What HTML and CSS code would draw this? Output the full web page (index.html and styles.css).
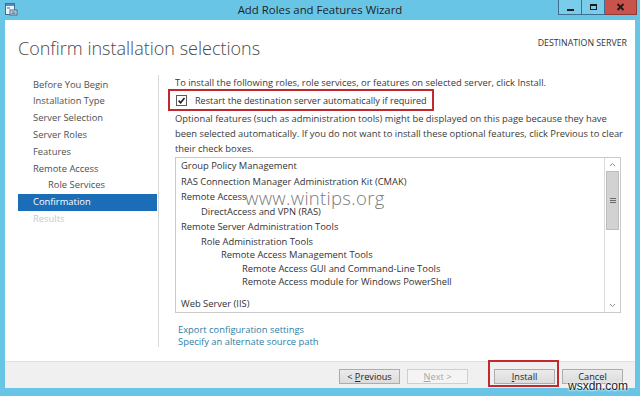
FILE: index.html
```html
<!DOCTYPE html>
<html>
<head>
<meta charset="utf-8">
<title>Add Roles and Features Wizard</title>
<link rel="stylesheet" href="styles.css">
</head>
<body>
<div class="window">
  <div class="titlebar">
    <div class="icon-cell">
      <svg class="app-icon" width="14" height="14" viewBox="0 0 14 14">
        <rect x="1.5" y="1.5" width="9" height="11" fill="#eef6fb" stroke="#3f6e96" stroke-width="1"/>
        <rect x="2" y="2" width="8" height="2" fill="#4a8fc8"/>
        <rect x="3" y="5.5" width="3" height="1" fill="#3f6e96"/>
        <rect x="6" y="8" width="7" height="5" fill="#d9e6ef" stroke="#44698a" stroke-width="1"/>
        <rect x="7.5" y="9.5" width="4" height="1" fill="#44698a"/>
        <rect x="7.5" y="11" width="4" height="0.8" fill="#44698a"/>
      </svg>
    </div>
    <div class="title">Add Roles and Features Wizard</div>
    <div class="caption-btns">
      <div class="cbtn min"><span class="glyph-min"></span></div>
      <div class="cbtn max"><span class="glyph-max"></span></div>
      <div class="cbtn close">
        <svg width="9" height="8" viewBox="0 0 9 8"><path d="M1.5 1 L7.5 7 M7.5 1 L1.5 7" stroke="#1c1c1c" stroke-width="1.8"/></svg>
      </div>
    </div>
  </div>

  <div class="client">
    <div class="header">
      <h1>Confirm installation selections</h1>
      <div class="dest">DESTINATION SERVER</div>
    </div>

    <div class="main">
      <nav class="steps">
        <div class="step">Before You Begin</div>
        <div class="step">Installation Type</div>
        <div class="step">Server Selection</div>
        <div class="step">Server Roles</div>
        <div class="step">Features</div>
        <div class="step">Remote Access</div>
        <div class="step sub">Role Services</div>
        <div class="step active">Confirmation</div>
        <div class="step disabled">Results</div>
      </nav>

      <div class="content">
        <p class="intro">To install the following roles, role services, or features on selected server, click Install.</p>
        <div class="restart">
          <span class="chk">
            <svg width="9" height="9" viewBox="0 0 9 9"><path d="M1.6 4.6 L3.6 6.7 L7.5 2" fill="none" stroke="#1e1e1e" stroke-width="1.6"/></svg>
          </span>
          <span class="restart-label">Restart the destination server automatically if required</span>
        </div>
        <p class="note">Optional features (such as administration tools) might be displayed on this page because they have<br>been selected automatically. If you do not want to install these optional features, click Previous to clear<br>their check boxes.</p>

        <div class="listbox">
          <div class="items">
            <div class="grp">
              <div class="item">Group Policy Management</div>
            </div>
            <div class="grp">
              <div class="item">RAS Connection Manager Administration Kit (CMAK)</div>
            </div>
            <div class="grp">
              <div class="item">Remote Access</div>
              <div class="item l1">DirectAccess and VPN (RAS)</div>
            </div>
            <div class="grp">
              <div class="item">Remote Server Administration Tools</div>
              <div class="item l1 tight">Role Administration Tools</div>
              <div class="item l2 tight">Remote Access Management Tools</div>
              <div class="item l3 tight">Remote Access GUI and Command-Line Tools</div>
              <div class="item l3">Remote Access module for Windows PowerShell</div>
            </div>
            <div class="grp last">
              <div class="item">Web Server (IIS)</div>
            </div>
          </div>
          <div class="scrollbar">
            <div class="sb-arrow">
              <svg width="7" height="5" viewBox="0 0 7 5"><path d="M1 4 L3.5 1.5 L6 4" fill="none" stroke="#8a8a8a" stroke-width="1"/></svg>
            </div>
            <div class="sb-thumb"><span class="grip"></span></div>
            <div class="sb-track"></div>
            <div class="sb-arrow">
              <svg width="7" height="5" viewBox="0 0 7 5"><path d="M1 1 L3.5 3.5 L6 1" fill="none" stroke="#8a8a8a" stroke-width="1"/></svg>
            </div>
          </div>
          <div class="wm-wintips">www.wintips.org</div>
        </div>

        <div class="links">
          <a href="#">Export configuration settings</a>
          <a href="#">Specify an alternate source path</a>
        </div>
      </div>
    </div>

    <div class="footer">
      <button class="btn">&lt; <u>P</u>revious</button>
      <button class="btn disabled"><u>N</u>ext &gt;</button>
      <span class="install-wrap"><button class="btn"><u>I</u>nstall</button></span>
      <button class="btn">Cancel</button>
    </div>
  </div>

  <div class="wm-wsxdn">wsxdn.com</div>
</div>
</body>
</html>
```

FILE: styles.css
```css
* { box-sizing: border-box; }

html, body {
  margin: 0;
  padding: 0;
}

body {
  width: 640px;
  height: 396px;
  overflow: hidden;
  font-family: "Open Sans", "Noto Sans", sans-serif;
  color: #333;
}

.window {
  position: relative;
  width: 640px;
  height: 396px;
  background: #68c5e6;
  display: flex;
  flex-direction: column;
}

/* Title bar */
.titlebar {
  height: 20px;
  display: grid;
  grid-template-columns: 1fr auto 1fr;
  flex: none;
}

.icon-cell {
  padding: 2px 0 0 4px;
}

.app-icon { display: block; }

.title {
  font-size: 11.4px;
  line-height: 20px;
  color: #1f1f1f;
}

.caption-btns {
  justify-self: end;
  display: flex;
  margin-right: 3px;
  height: 15px;
}

.cbtn {
  height: 15px;
  display: flex;
  align-items: center;
  justify-content: center;
  border: 1px solid #3c6f92;
  border-top: none;
}

.cbtn.min { width: 24px; background: #79cdea; }
.cbtn.max { width: 23px; background: #79cdea; border-left: none; }
.cbtn.close { width: 32px; background: #c9524c; border-color: #8e3b36; border-left: none; }

.glyph-min {
  width: 7px;
  height: 2px;
  background: #1c1c1c;
  margin-top: 5px;
}

.glyph-max {
  width: 7px;
  height: 6px;
  border: 1px solid #1c1c1c;
  border-top-width: 2px;
}

/* Client area */
.client {
  flex: 1;
  margin: 0 5px 8px 5px;
  background: #fff;
  display: flex;
  flex-direction: column;
  min-height: 0;
}

.header {
  height: 55px;
  flex: none;
  display: flex;
  justify-content: space-between;
  padding: 0 8px 0 13px;
}

.header h1 {
  margin: 16px 0 0;
  font-size: 18px;
  line-height: 24px;
  font-weight: 300;
  color: #4a4a4a;
}

.dest {
  margin-top: 18px;
  font-size: 8.8px;
  line-height: 10px;
  color: #333;
}

.main {
  flex: 1;
  display: flex;
  min-height: 0;
}

.steps {
  width: 141px;
  margin: 0 0 14px 13px;
  border-right: 1px solid #d9d9d9;
  padding-top: 1.6px;
  flex: none;
}

.step {
  height: 16.8px;
  line-height: 16.8px;
  padding-left: 15px;
  font-size: 9.4px;
  color: #4f4f4f;
  margin-right: 1px;
  white-space: nowrap;
}

.step.sub { padding-left: 30px; }
.step.active { background: #1b6db8; color: #fff; }
.step.disabled { color: #c9c9c9; }

.content {
  flex: 1;
  padding: 0 6px 0 16px;
  font-size: 9.4px;
  color: #3a3a3a;
}

.intro,
.note {
  margin: 0;
  line-height: 15px;
  white-space: nowrap;
}

.restart {
  display: inline-flex;
  align-items: center;
  height: 22px;
  margin: -1px 0 0 -7px;
  padding: 0 5px 0 6px;
  border: 2px solid #c3282f;
  gap: 8px;
}

.chk {
  width: 11px;
  height: 11px;
  border: 1px solid #5a5a5a;
  background: #fff;
  display: flex;
  align-items: center;
  justify-content: center;
}

.chk svg { display: block; }

.restart-label {
  color: #333;
  font-size: 9.1px;
}

.listbox {
  position: relative;
  margin: 1px 8px 0 0;
  height: 156px;
  border: 1px solid #cacaca;
  display: flex;
}

.items {
  flex: 1;
  padding: 1px 0 0 5px;
}

.grp { margin-bottom: 1px; }
.grp.last { margin-top: 7.5px; }

.item {
  line-height: 14.5px;
  height: 14.5px;
  color: #333;
  white-space: nowrap;
}

.item.tight { height: 13.5px; line-height: 13.5px; }
.item.l1 { padding-left: 20px; }
.item.l2 { padding-left: 40px; }
.item.l3 { padding-left: 61px; }

.scrollbar {
  width: 16px;
  border-left: 1px solid #dadada;
  display: flex;
  flex-direction: column;
  background: #fff;
}

.sb-arrow {
  height: 13px;
  display: flex;
  align-items: center;
  justify-content: center;
  flex: none;
}

.sb-thumb {
  height: 59px;
  margin: 0 1px;
  background: #d2d2d2;
  border: 1px solid #bdbdbd;
  display: flex;
  align-items: center;
  justify-content: center;
  flex: none;
}

.grip {
  width: 6px;
  height: 5px;
  border-top: 1px solid #6a6a6a;
  border-bottom: 1px solid #6a6a6a;
  position: relative;
}

.grip::after {
  content: "";
  position: absolute;
  left: 0;
  right: 0;
  top: 1px;
  height: 1px;
  background: #6a6a6a;
}

.sb-track { flex: 1; }

.wm-wintips {
  position: absolute;
  left: 69px;
  top: 30px;
  font-size: 18.5px;
  line-height: 20px;
  font-weight: 300;
  color: #7a7a7a;
  letter-spacing: 0.3px;
  pointer-events: none;
}

.links {
  margin-top: 11px;
  padding-left: 3px;
  display: flex;
  flex-direction: column;
  align-items: flex-start;
  line-height: 12px;
}

.links a {
  color: #2f7ea6;
  text-decoration: none;
}

/* Footer */
.footer {
  height: 27px;
  flex: none;
  background: #f0f0f0;
  border-top: 1px solid #e0e0e0;
  display: flex;
  justify-content: flex-end;
  align-items: flex-start;
  padding: 7px 12px 0 0;
  gap: 7px;
}

.btn {
  width: 61px;
  height: 15px;
  padding: 0;
  font-family: inherit;
  font-size: 9.2px;
  line-height: 13px;
  color: #262626;
  background: linear-gradient(#ebebeb, #dcdcdc);
  border: 1px solid #acacac;
  border-radius: 0;
}

.btn u { text-decoration: underline; }

.btn.disabled {
  background: #f4f4f4;
  border-color: #cfcfcf;
  color: #a6a6a6;
}

.install-wrap {
  position: relative;
  margin-left: 19px;
  display: flex;
}

.install-wrap::after {
  content: "";
  position: absolute;
  left: -6px;
  right: -4px;
  top: -9px;
  bottom: -3px;
  border: 2px solid #c3282f;
  pointer-events: none;
}

.wm-wsxdn {
  position: absolute;
  right: 12px;
  bottom: 3px;
  font-family: "Liberation Sans", Arial, sans-serif;
  font-size: 12px;
  line-height: 14px;
  color: #1a1a1a;
  text-shadow: 0 0 2px #fff, 0 0 2px #fff, 0 0 3px #fff;
}
```
